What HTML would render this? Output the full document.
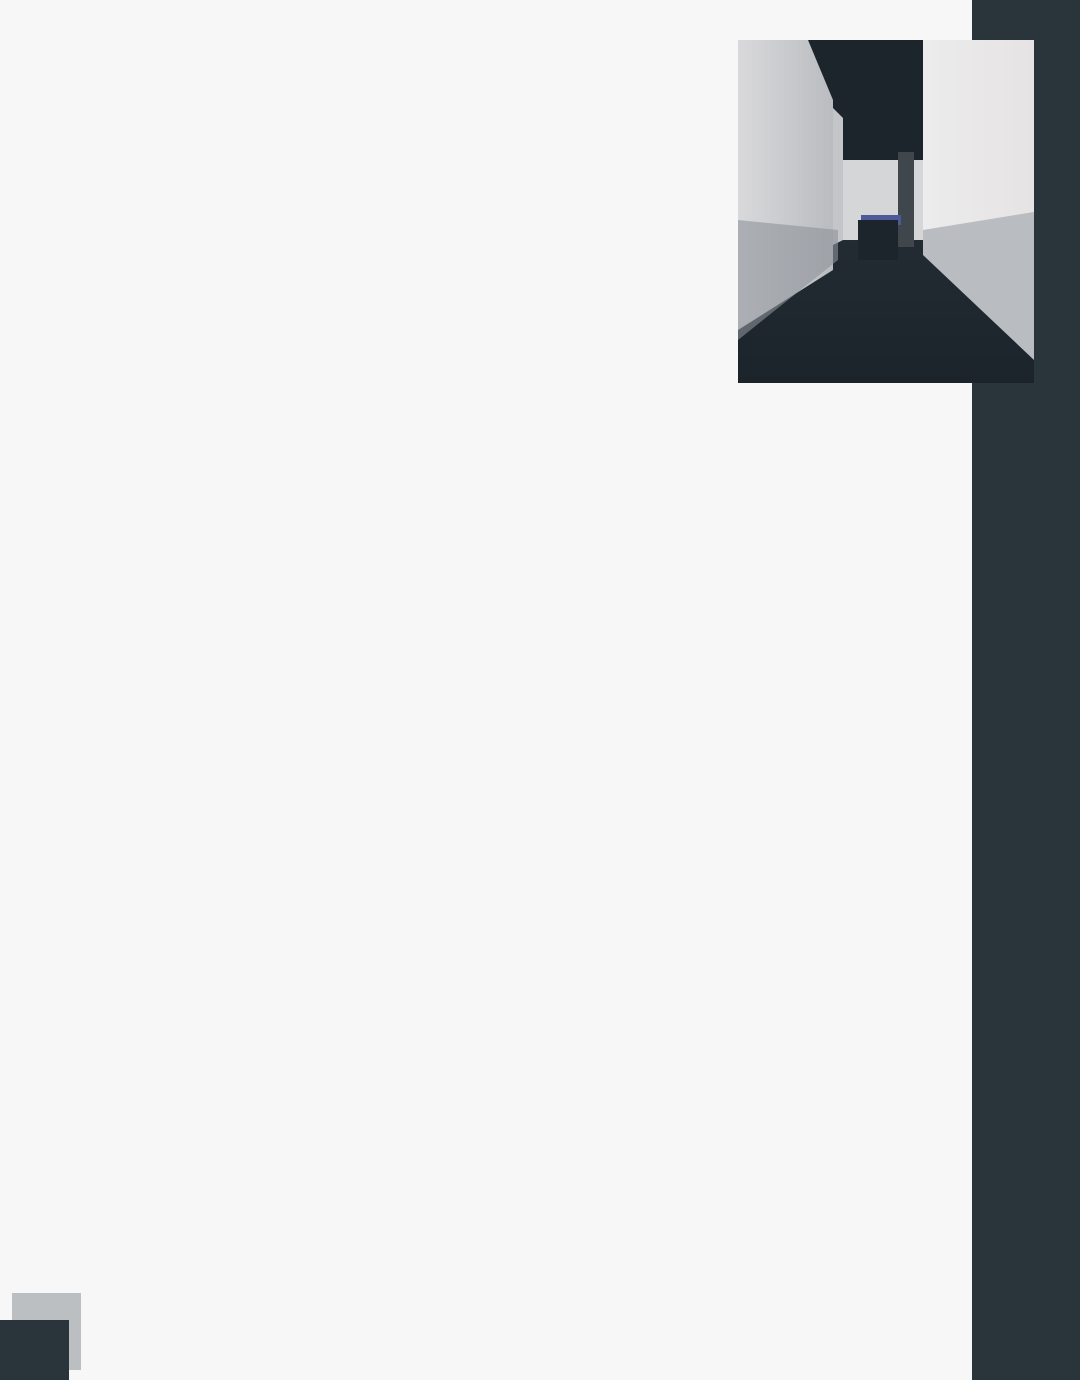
<!DOCTYPE html>
<html><head><style>
html,body{margin:0;padding:0;width:1080px;height:1380px;background:#f7f7f7;overflow:hidden;position:relative;font-family:"Liberation Sans",sans-serif}
.bar{position:absolute;left:972px;top:0;width:108px;height:1380px;background:#29343b}
.img{position:absolute;left:738px;top:40px;width:296px;height:343px}
.sq1{position:absolute;left:12px;top:1293px;width:69px;height:77px;background:#bcbfc1}
.sq2{position:absolute;left:0;top:1320px;width:69px;height:60px;background:#29343b}
</style></head><body>
<div class="bar"></div>
<svg class="img" viewBox="0 0 296 343" preserveAspectRatio="none">
<defs>
<linearGradient id="fl" x1="0" y1="0" x2="0" y2="1"><stop offset="0" stop-color="#2f363d"/><stop offset="1" stop-color="#1b242b"/></linearGradient>
<linearGradient id="lw" x1="0" y1="0" x2="1" y2="0"><stop offset="0" stop-color="#d9d9db"/><stop offset="1" stop-color="#b9bcc0"/></linearGradient>
<linearGradient id="rw" x1="0" y1="0" x2="1" y2="0"><stop offset="0" stop-color="#ececec"/><stop offset="1" stop-color="#e6e3e4"/></linearGradient>
</defs>
<rect width="296" height="343" fill="url(#fl)"/>
<rect x="60" y="0" width="140" height="120" fill="#1d252c"/>
<rect x="100" y="120" width="90" height="80" fill="#d5d6d8"/>
<rect x="160" y="112" width="16" height="95" fill="#3f474d"/>
<rect x="123" y="175" width="40" height="10" fill="#4c5a9a"/>
<path d="M0 0H70L95 60V230L0 290Z" fill="url(#lw)"/>
<path d="M95 68L105 78V200L95 205Z" fill="#c4c5c8"/>
<path d="M0 180L100 190V220L0 300Z" fill="#8d939a" opacity=".6"/>
<path d="M185 0H296V180L185 190Z" fill="url(#rw)"/>
<path d="M185 190L296 172V320L185 215Z" fill="#b9bcc0"/>
<path d="M120 180h40v40h-40z" fill="#1d252c"/>
</svg>
<div class="sq1"></div>
<div class="sq2"></div>
</body></html>
